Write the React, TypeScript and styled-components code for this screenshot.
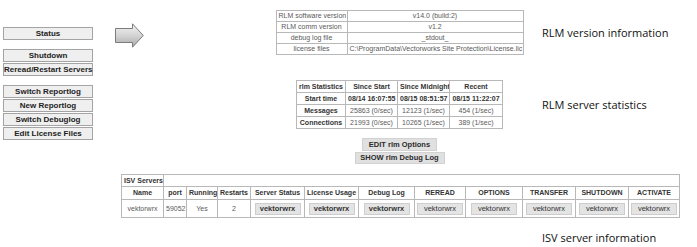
import React from 'react';
import styled, { createGlobalStyle } from 'styled-components';

const GlobalStyle = createGlobalStyle`
  html, body { margin: 0; padding: 0; background: #fff; }
  body { font-family: "Liberation Sans", Arial, sans-serif; }
`;

const Page = styled.div`
  width: 697px;
  height: 247px;
  overflow: hidden;
  box-sizing: border-box;
  padding: 10px 0 0 3px;
`;

const Top = styled.div`
  display: flex;
  align-items: flex-start;
`;

/* left command menu */
const Menu = styled.div`
  width: 90px;
  flex-shrink: 0;
  margin-top: 17px;
  display: flex;
  flex-direction: column;
  gap: 9px;
`;
const MenuGroup = styled.div`
  display: flex;
  flex-direction: column;
  gap: 1px;
`;
const MenuButton = styled.div`
  height: 13px;
  box-sizing: border-box;
  border: 1px solid #a4a4a4;
  background: #efefef;
  color: #222;
  font-size: 8px;
  font-weight: bold;
  line-height: 11px;
  text-align: center;
  white-space: nowrap;
`;

const Arrow = styled.svg`
  flex-shrink: 0;
  margin: 13px 0 0 22px;
`;

/* centre column */
const Center = styled.div`
  margin-left: 132px;
  display: flex;
  flex-direction: column;
`;
const Section = styled.div<{ $gap?: number }>`
  display: flex;
  align-items: center;
  margin-top: ${({ $gap }) => $gap ?? 0}px;
`;
const Slot = styled.div`
  width: 247px;
  display: flex;
  justify-content: center;
  flex-shrink: 0;
`;
const Label = styled.div`
  margin-left: 19px;
  font-family: "Open Sans", "Noto Sans", sans-serif;
  font-size: 11px;
  color: #111;
  white-space: nowrap;
`;

const Grid = styled.table<{ $w: number }>`
  width: ${({ $w }) => $w}px;
  border-collapse: collapse;
  table-layout: fixed;
`;
const Cell = styled.td<{ $h: number; $bold?: boolean; $left?: boolean }>`
  height: ${({ $h }) => $h}px;
  padding: 0 2px;
  border: 1px solid #b8b8b8;
  font-size: 7px;
  line-height: 8px;
  font-weight: ${({ $bold }) => ($bold ? 'bold' : 'normal')};
  color: ${({ $bold }) => ($bold ? '#333' : '#5a5a5a')};
  text-align: ${({ $left }) => ($left ? 'left' : 'center')};
  white-space: nowrap;
  overflow: hidden;
`;

const Actions = styled.div`
  width: 247px;
  margin-top: 9px;
  display: flex;
  flex-direction: column;
  align-items: center;
  gap: 1px;
`;
const ActionButton = styled.div<{ $w: number; $h: number }>`
  width: ${({ $w }) => $w}px;
  height: ${({ $h }) => $h}px;
  line-height: ${({ $h }) => $h - 2}px;
  box-sizing: border-box;
  border: 1px solid #d2d2d2;
  background: #e0e0e0;
  color: #2a2a2a;
  font-size: 7.5px;
  font-weight: bold;
  text-align: center;
  white-space: nowrap;
`;

/* ISV servers */
const Isv = styled.div`
  margin: 10px 0 0 118px;
`;
const IsvButton = styled.div<{ $strong: boolean }>`
  margin: 0 auto;
  width: 46px;
  height: 12px;
  line-height: 10px;
  box-sizing: border-box;
  border: 1px solid #cdcdcd;
  background: #e4e4e4;
  color: #333;
  font-size: 7.5px;
  font-weight: ${({ $strong }) => ($strong ? 'bold' : 'normal')};
  text-align: center;
`;
const Footer = styled.div`
  margin: 12px 0 0 539px;
  font-family: "Open Sans", "Noto Sans", sans-serif;
  font-size: 11px;
  color: #111;
`;

const versions: [string, string][] = [
  ['RLM software version', 'v14.0 (build:2)'],
  ['RLM comm version', 'v1.2'],
  ['debug log file', '_stdout_'],
  ['license files', 'C:\\ProgramData\\Vectorworks Site Protection\\License.lic'],
];

const stats: [string, string, string, string][] = [
  ['Start time', '08/14 16:07:55', '08/15 08:51:57', '08/15 11:22:07'],
  ['Messages', '25863 (0/sec)', '12123 (1/sec)', '454 (1/sec)'],
  ['Connections', '21993 (0/sec)', '10265 (1/sec)', '389 (1/sec)'],
];

const isvCols = [42, 23, 31, 33, 54, 54, 56, 51, 57, 53, 53, 51];
const isvHead = ['Name', 'port', 'Running', 'Restarts', 'Server Status', 'License Usage', 'Debug Log', 'REREAD', 'OPTIONS', 'TRANSFER', 'SHUTDOWN', 'ACTIVATE'];

export default function App() {
  return (
    <Page>
      <GlobalStyle />
      <Top>
        <Menu>
          <MenuGroup>
            <MenuButton>Status</MenuButton>
          </MenuGroup>
          <MenuGroup>
            <MenuButton>Shutdown</MenuButton>
            <MenuButton>Reread/Restart Servers</MenuButton>
          </MenuGroup>
          <MenuGroup>
            <MenuButton>Switch Reportlog</MenuButton>
            <MenuButton>New Reportlog</MenuButton>
            <MenuButton>Switch Debuglog</MenuButton>
            <MenuButton>Edit License Files</MenuButton>
          </MenuGroup>
        </Menu>

        <Arrow width="29" height="25" viewBox="0 0 29 25">
          <defs>
            <linearGradient id="arrowFill" x1="0" y1="0" x2="0" y2="1">
              <stop offset="0" stopColor="#f4f4f4" />
              <stop offset="0.5" stopColor="#d4d4d4" />
              <stop offset="1" stopColor="#a8a8a8" />
            </linearGradient>
          </defs>
          <path
            d="M0.5 5.5 H17.5 V0.8 L28.3 12.5 L17.5 24.2 V19.5 H0.5 Z"
            fill="url(#arrowFill)"
            stroke="#7c7c7c"
            strokeWidth="1"
            strokeLinejoin="round"
          />
        </Arrow>

        <Center>
          <Section>
            <Slot>
              <Grid $w={247}>
                <colgroup>
                  <col style={{ width: 71 }} />
                  <col style={{ width: 176 }} />
                </colgroup>
                <tbody>
                  {versions.map(([k, v]) => (
                    <tr key={k}>
                      <Cell $h={10}>{k}</Cell>
                      <Cell $h={10}>{v}</Cell>
                    </tr>
                  ))}
                </tbody>
              </Grid>
            </Slot>
            <Label>RLM version information</Label>
          </Section>

          <Section $gap={25}>
            <Slot>
              <Grid $w={206}>
                <colgroup>
                  <col style={{ width: 49 }} />
                  <col style={{ width: 52 }} />
                  <col style={{ width: 52 }} />
                  <col style={{ width: 53 }} />
                </colgroup>
                <tbody>
                  <tr>
                    <Cell $h={11} $bold>rlm Statistics</Cell>
                    <Cell $h={11} $bold>Since Start</Cell>
                    <Cell $h={11} $bold>Since Midnight</Cell>
                    <Cell $h={11} $bold>Recent</Cell>
                  </tr>
                  {stats.map(([k, a, b, c]) => (
                    <tr key={k}>
                      <Cell $h={11} $bold>{k}</Cell>
                      <Cell $h={11} $bold={k === 'Start time'}>{a}</Cell>
                      <Cell $h={11} $bold={k === 'Start time'}>{b}</Cell>
                      <Cell $h={11} $bold={k === 'Start time'}>{c}</Cell>
                    </tr>
                  ))}
                </tbody>
              </Grid>
            </Slot>
            <Label>RLM server statistics</Label>
          </Section>

          <Actions>
            <ActionButton $w={75} $h={13}>EDIT rlm Options</ActionButton>
            <ActionButton $w={90} $h={12}>SHOW rlm Debug Log</ActionButton>
          </Actions>
        </Center>
      </Top>

      <Isv>
        <Grid $w={558}>
          <colgroup>
            {isvCols.map((w, i) => (
              <col key={i} style={{ width: w }} />
            ))}
          </colgroup>
          <tbody>
            <tr>
              <Cell $h={11} $bold $left>ISV Servers</Cell>
              <Cell $h={11} colSpan={11} />
            </tr>
            <tr>
              {isvHead.map((h) => (
                <Cell key={h} $h={12} $bold>{h}</Cell>
              ))}
            </tr>
            <tr>
              <Cell $h={17}>vektorwrx</Cell>
              <Cell $h={17}>59052</Cell>
              <Cell $h={17}>Yes</Cell>
              <Cell $h={17}>2</Cell>
              {isvHead.slice(4).map((h, i) => (
                <Cell key={h} $h={17}>
                  <IsvButton $strong={i < 3}>vektorwrx</IsvButton>
                </Cell>
              ))}
            </tr>
          </tbody>
        </Grid>
      </Isv>

      <Footer>ISV server information</Footer>
    </Page>
  );
}
